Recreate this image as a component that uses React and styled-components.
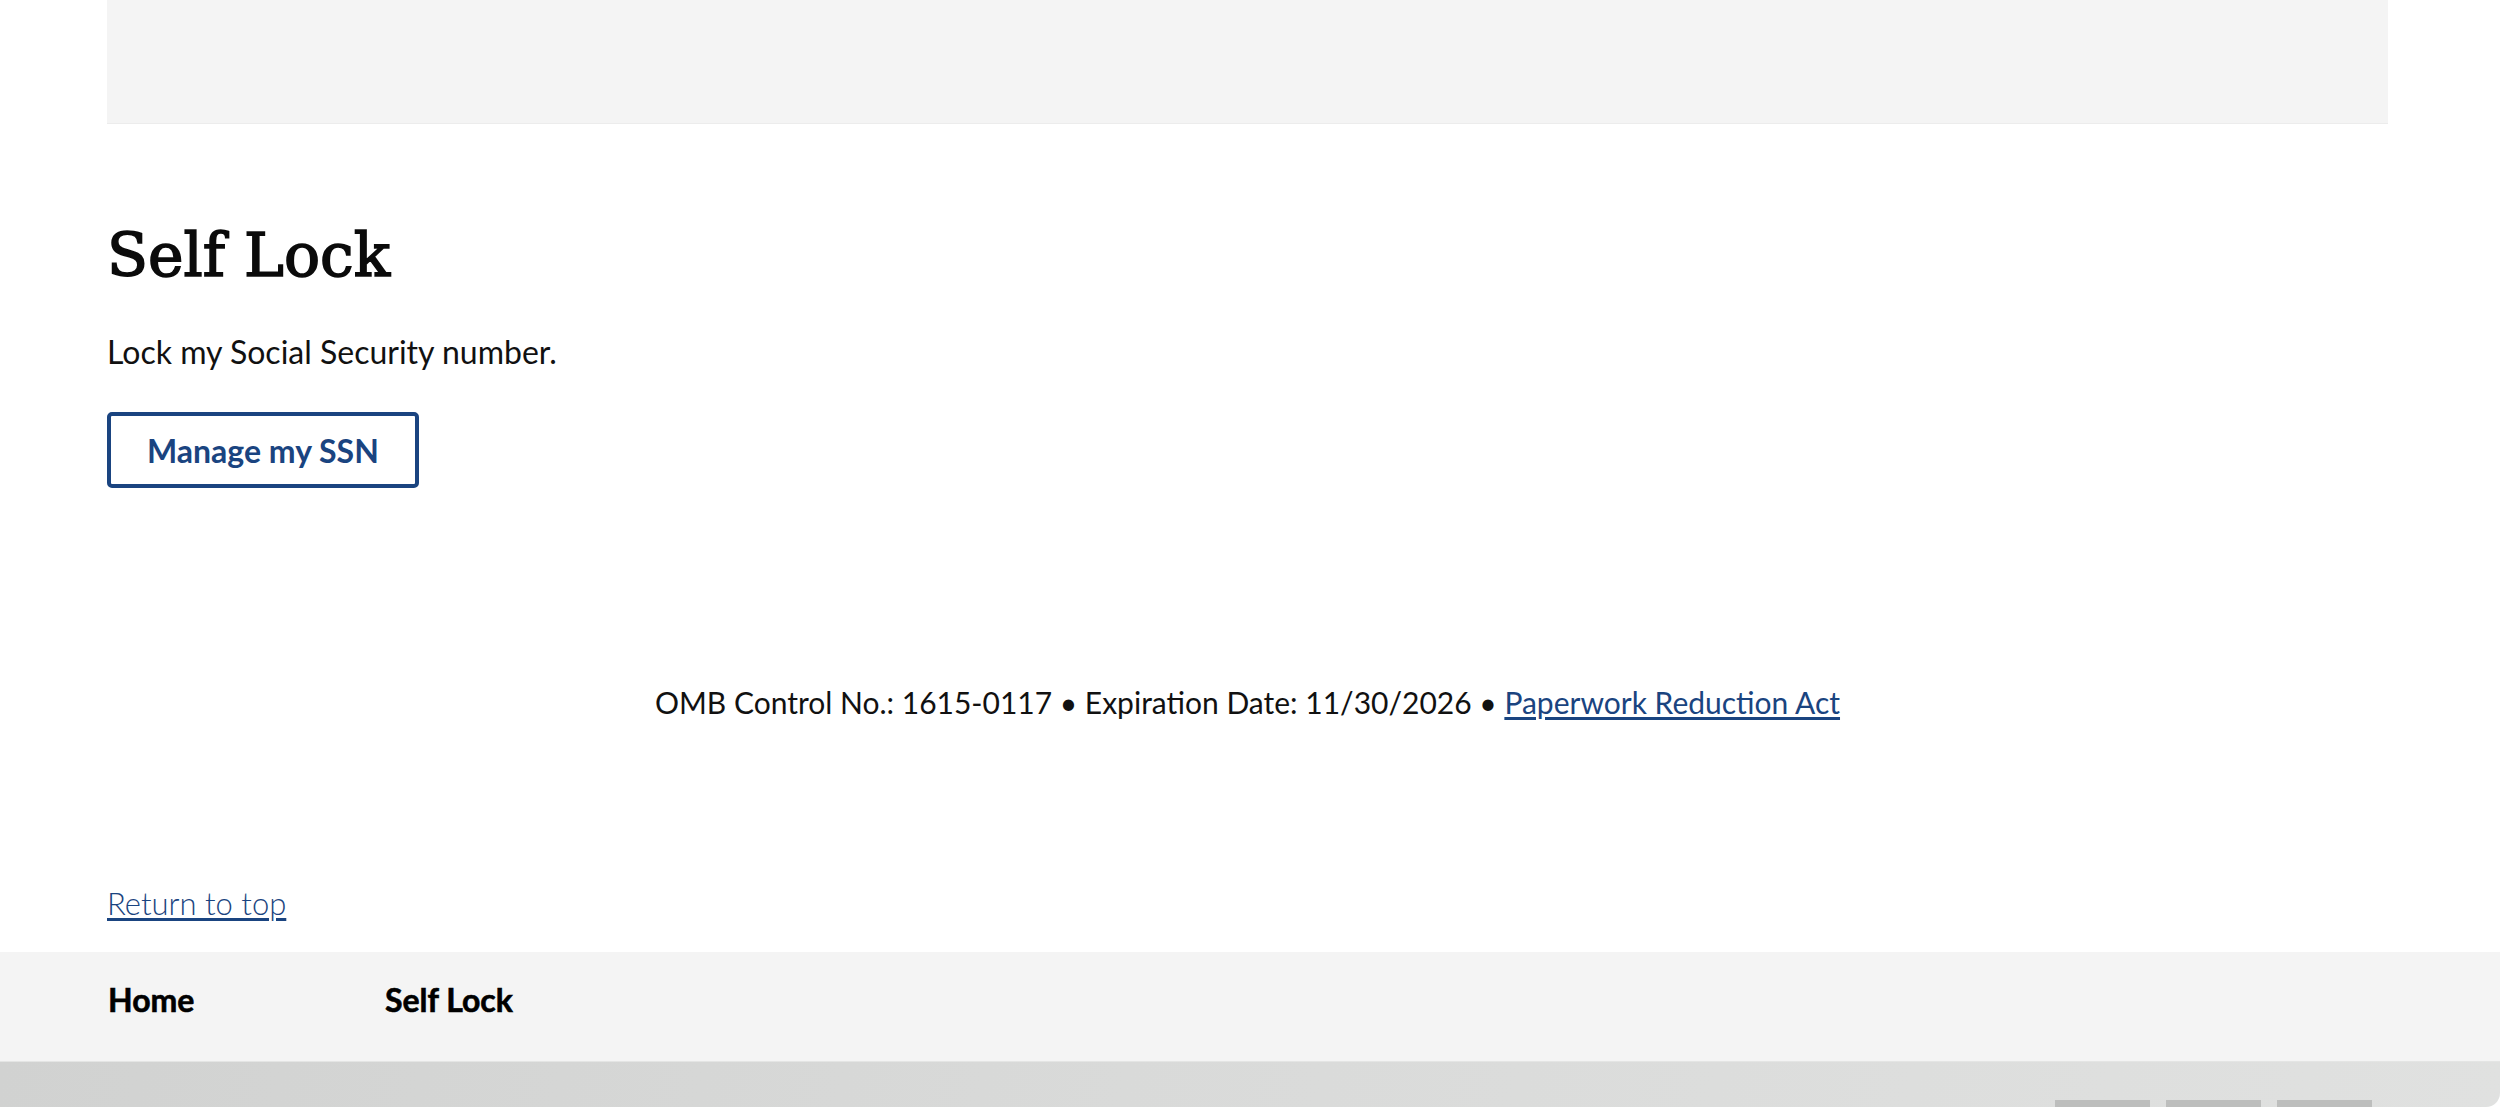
import React from 'react'
import styled, { createGlobalStyle } from 'styled-components'

const GlobalStyle = createGlobalStyle`
    html, body {
        margin: 0;
        padding: 0;
        background: #fff;
        overflow: hidden;
    }
    body {
        font-family: Lato, "Liberation Sans", sans-serif;
        color: #111;
    }
`

const Page = styled.div`
    display: flex;
    flex-direction: column;
    height: 1107px;
`

const Container = styled.div`
    padding: 0 112px 0 107px;
`

const Banner = styled.div`
    height: 123px;
    background: #f4f4f4;
    border-bottom: 1px solid #ececec;
`

const Title = styled.h1`
    margin: 95px 0 0;
    font-family: "DejaVu Serif", "Liberation Serif", serif;
    font-weight: 400;
    font-size: 60px;
    line-height: 72px;
    color: #0b0b0b;
    -webkit-text-stroke: 1.6px #0b0b0b;
`

const Lead = styled.p`
    margin: 37px 0 0;
    font-size: 32px;
    line-height: 48px;
`

const OutlineButton = styled.button`
    display: block;
    margin-top: 36px;
    height: 76px;
    padding: 0 36px;
    background: #fff;
    border: 4px solid #1a4480;
    border-radius: 5px;
    color: #1a4480;
    font-family: Lato, "Liberation Sans", sans-serif;
    font-weight: 700;
    font-size: 32px;
    cursor: pointer;
`

const Omb = styled.p`
    margin: 191px 0 0;
    text-align: center;
    font-size: 30px;
    line-height: 46px;
`

const Link = styled.a`
    color: #1a4480;
    text-decoration: underline;
    text-underline-offset: 3px;
    font-weight: ${p => (p.light ? 300 : 400)};
`

const ReturnRow = styled.div`
    margin-top: 154px;
    font-size: 31px;
    line-height: 48px;
`

const FooterNav = styled.nav`
    margin-top: 25px;
    background: #f4f4f4;
    height: 109px;
    box-sizing: border-box;
    padding: 24px 112px 0 108px;
`

const NavList = styled.ul`
    list-style: none;
    margin: 0;
    padding: 0;
    display: grid;
    grid-template-columns: repeat(2, 277px);
`

const NavItem = styled.li`
    font-weight: 700;
    font-size: 32px;
    line-height: 48px;
    color: #000;
    -webkit-text-stroke: 0.6px #000;
`

const Dock = styled.div`
    flex: 1;
    display: flex;
    justify-content: flex-end;
    align-items: flex-end;
    gap: 16px;
    padding-right: 128px;
    background: linear-gradient(100deg, #d1d2d1 0%, #d9dad9 45%, #e0e1e0 100%);
    border-top: 1px solid #e4e5e4;
    border-bottom-right-radius: 14px;
    overflow: hidden;
`

const DockTab = styled.span`
    width: 95px;
    height: 7px;
    background: #bdbebd;
`

const App = () => {
    return (
        <Page>
            <GlobalStyle />
            <Container>
                <Banner />
                <main>
                    <Title>Self Lock</Title>
                    <Lead>Lock my Social Security number.</Lead>
                    <OutlineButton>Manage my SSN</OutlineButton>
                </main>
                <Omb>
                    OMB Control No.: 1615-0117 • Expiration Date: 11/30/2026 •{' '}
                    <Link href="#">Paperwork Reduction Act</Link>
                </Omb>
                <ReturnRow>
                    <Link href="#" light>Return to top</Link>
                </ReturnRow>
            </Container>
            <FooterNav>
                <NavList>
                    <NavItem>Home</NavItem>
                    <NavItem>Self Lock</NavItem>
                </NavList>
            </FooterNav>
            <Dock>
                <DockTab />
                <DockTab />
                <DockTab />
            </Dock>
        </Page>
    )
}

export default App
